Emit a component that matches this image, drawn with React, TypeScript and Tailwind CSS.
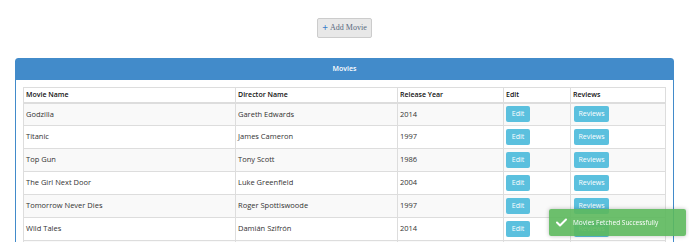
import React from 'react';

interface Movie {
  name: string;
  director: string;
  year: string;
}

const movies: Movie[] = [
  { name: 'Godzilla', director: 'Gareth Edwards', year: '2014' },
  { name: 'Titanic', director: 'James Cameron', year: '1997' },
  { name: 'Top Gun', director: 'Tony Scott', year: '1986' },
  { name: 'The Girl Next Door', director: 'Luke Greenfield', year: '2004' },
  { name: 'Tomorrow Never Dies', director: 'Roger Spottiswoode', year: '1997' },
  { name: 'Wild Tales', director: 'Damián Szifrón', year: '2014' },
  { name: 'Inception', director: 'Christopher Nolan', year: '2010' },
];

const App: React.FC = () => {
  return (
    <div className="min-h-[242px] bg-white font-['Open_Sans',sans-serif] text-[7.5px] text-[#333]">
      <div className="flex justify-center pt-[18px]">
        <button className="flex h-[20px] w-[55px] items-center justify-center gap-[2px] rounded-[2px] border border-[#ccc] bg-[#e8e8e8] font-['Liberation_Serif',serif] text-[8px] text-[#5a6a80]">
          <span className="text-[10px] font-bold leading-none text-[#3a7bc8]">+</span>
          Add Movie
        </button>
      </div>

      <div className="mx-[15px] mt-[20px] rounded-t-[3px] border border-[#428bca]">
        <div className="flex h-[21px] items-center justify-center bg-[#428bca] text-[7px] font-semibold text-white">
          Movies
        </div>
        <div className="px-[7px] pt-[7px]">
          <table className="w-full table-fixed border-collapse border border-[#ddd]">
            <colgroup>
              <col className="w-[212px]" />
              <col className="w-[162px]" />
              <col className="w-[106px]" />
              <col className="w-[67px]" />
              <col />
            </colgroup>
            <thead>
              <tr className="h-[15px] border-b-2 border-[#ddd] text-left text-[7px] text-[#111]">
                <th className="border border-[#ddd] px-[2px] font-semibold">Movie Name</th>
                <th className="border border-[#ddd] px-[2px] font-semibold">Director Name</th>
                <th className="border border-[#ddd] px-[2px] font-semibold">Release Year</th>
                <th className="border border-[#ddd] px-[2px] font-semibold">Edit</th>
                <th className="border border-[#ddd] px-[2px] font-semibold">Reviews</th>
              </tr>
            </thead>
            <tbody>
              {movies.map((m, i) => (
                <tr key={m.name} className={`h-[23px] ${i % 2 === 0 ? 'bg-[#f9f9f9]' : 'bg-white'}`}>
                  <td className="border border-[#ddd] px-[2px] align-middle">{m.name}</td>
                  <td className="border border-[#ddd] px-[2px] align-middle">{m.director}</td>
                  <td className="border border-[#ddd] px-[2px] align-middle">{m.year}</td>
                  <td className="border border-[#ddd] px-[2px] align-middle">
                    <button className="h-[16px] w-[24px] rounded-[2px] bg-[#5bc0de] text-[7px] text-white">Edit</button>
                  </td>
                  <td className="border border-[#ddd] px-[3px] align-middle">
                    <button className="h-[16px] w-[35px] rounded-[2px] bg-[#5bc0de] text-[7px] text-white">Reviews</button>
                  </td>
                </tr>
              ))}
            </tbody>
          </table>
        </div>
      </div>

      <div className="fixed bottom-[6px] right-[3px] flex h-[27px] w-[137px] items-center gap-[6px] rounded-[2px] bg-[#5cb85c]/90 px-[7px] text-[6.5px] text-white shadow-[0_0_4px_rgba(0,0,0,0.25)]">
        <svg width="11" height="9" viewBox="0 0 11 9" fill="none">
          <path d="M1 4.5 L4 7.5 L10 1.5" stroke="white" strokeWidth="2" strokeLinecap="round" strokeLinejoin="round" />
        </svg>
        Movies Fetched Successfully
      </div>
    </div>
  );
};

export default App;
